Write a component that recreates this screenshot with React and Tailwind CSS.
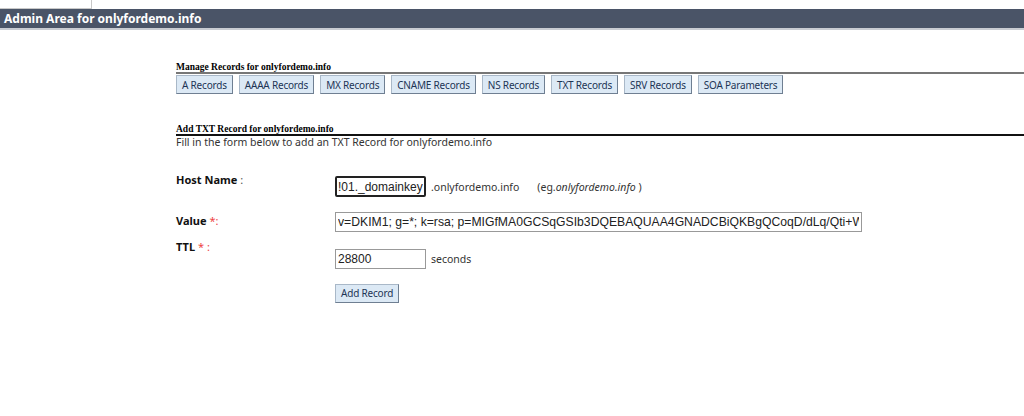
import React, { useState } from 'react';

const RECORD_TABS = [
  'A Records',
  'AAAA Records',
  'MX Records',
  'CNAME Records',
  'NS Records',
  'TXT Records',
  'SRV Records',
  'SOA Parameters',
];

const tahoma = "font-['Tahoma','Noto_Sans',sans-serif]";
const serif = "font-['Liberation_Serif','Times_New_Roman',serif]";
const arial = "font-['Liberation_Sans','Arial',sans-serif]";

const btn =
  'h-[19px] px-[5px] bg-[#dce9f5] border border-[#a9b8c8] border-r-[#6f7f92] border-b-[#6f7f92] text-[#1c3555] text-[10px] tracking-[-0.2px] leading-none';

function Star() {
  return <span className="text-[#e44]">*</span>;
}

export default function App() {
  const [host, setHost] = useState('!01._domainkey');
  const [value, setValue] = useState(
    'v=DKIM1; g=*; k=rsa; p=MIGfMA0GCSqGSIb3DQEBAQUAA4GNADCBiQKBgQCoqD/dLq/Qti+WgYv'
  );
  const [ttl, setTtl] = useState('28800');

  return (
    <div className={`min-h-screen bg-white text-black ${tahoma}`}>
      <div className="h-[9px] w-[92px] border-r border-b border-[#c8c8c8] bg-white" />

      <div className="h-[21px] bg-[#4a5467] border-b-2 border-[#c9ccd2] flex items-center pl-[4px]">
        <span className="text-white font-bold text-[12px]">
          Admin Area for onlyfordemo.info
        </span>
      </div>

      <div className="pl-[176px] pt-[32px]">
        <div className={`${serif} font-bold text-[9.5px] leading-[10px]`}>
          Manage Records for onlyfordemo.info
        </div>
        <div className="h-[2px] bg-[#777]" />
        <div className="flex gap-[6px] mt-[1px]">
          {RECORD_TABS.map((label) => (
            <button key={label} className={btn}>
              {label}
            </button>
          ))}
        </div>

        <div className={`${serif} font-bold text-[9.5px] leading-[10px] mt-[30px]`}>
          Add TXT Record for onlyfordemo.info
        </div>
        <div className="h-[2px] bg-[#111]" />
        <div className="text-[10.5px] text-[#333] leading-[12px]">
          Fill in the form below to add an TXT Record for onlyfordemo.info
        </div>

        <div className="flex mt-[25px] text-[11px] leading-[14px]">
          <div className="w-[159px] font-bold text-[#111]">
            Host Name <span className="font-normal text-[#555]">:</span>
          </div>
          <div className="flex items-center mt-[3px] text-[10.5px]">
            <input
              value={host}
              onChange={(e) => setHost(e.target.value)}
              className={`${arial} w-[91px] h-[21px] border-2 border-[#222] rounded-[2px] px-[1px] text-[12px] text-[#222] outline-none`}
            />
            <span className="ml-[5px] text-[#333]">.onlyfordemo.info</span>
            <span className="ml-[18px] text-[#333]">
              (eg.<i>onlyfordemo.info</i> )
            </span>
          </div>
        </div>

        <div className="flex mt-[15px] text-[11px] leading-[14px]">
          <div className="w-[159px] font-bold text-[#111] pt-[2px]">
            Value <span className="font-normal"><Star /><span className="text-[#e44]">:</span></span>
          </div>
          <input
            value={value}
            onChange={(e) => setValue(e.target.value)}
            className={`${arial} w-[527px] h-[20px] border border-[#999] px-[2px] text-[12.2px] text-[#222] outline-none`}
          />
        </div>

        <div className="flex mt-[8px] text-[11px] leading-[14px]">
          <div className="w-[159px] font-bold text-[#111]">
            TTL <span className="font-normal"><Star /> <span className="text-[#e44]">:</span></span>
          </div>
          <div className="flex items-center mt-[9px] text-[10.5px]">
            <input
              value={ttl}
              onChange={(e) => setTtl(e.target.value)}
              className={`${arial} w-[91px] h-[20px] border border-[#999] px-[2px] text-[12px] text-[#222] outline-none`}
            />
            <span className="ml-[5px] text-[#333]">seconds</span>
          </div>
        </div>

        <div className="pl-[159px] mt-[10px]">
          <button className={`${btn} h-[18px]`}>Add Record</button>
        </div>
      </div>
    </div>
  );
}
